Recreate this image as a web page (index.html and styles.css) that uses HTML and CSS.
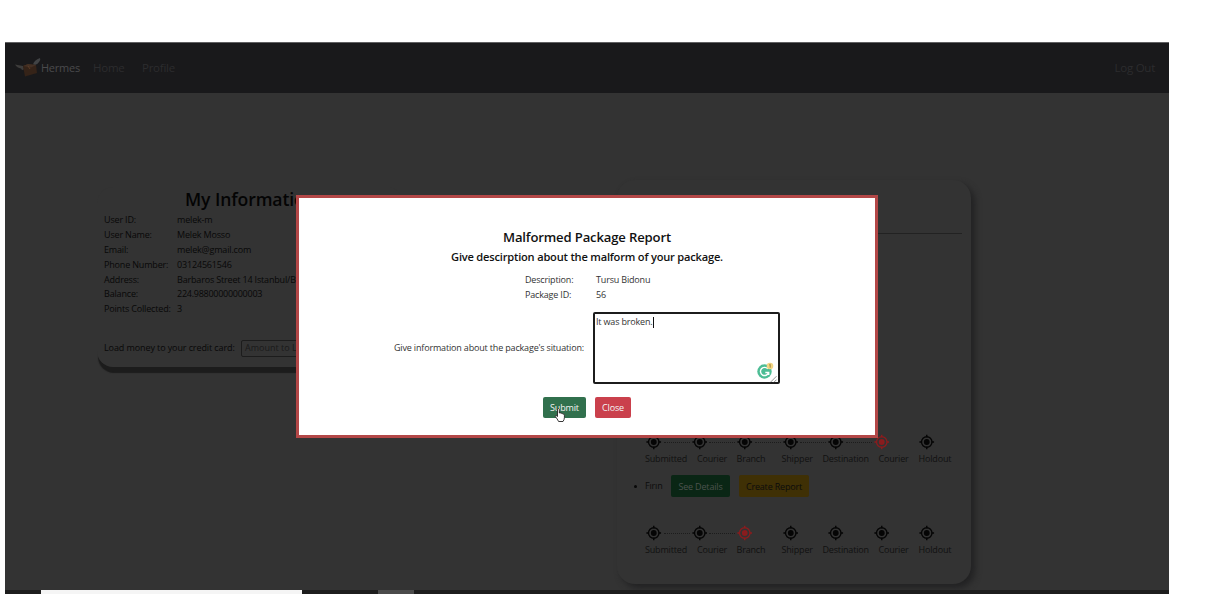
FILE: index.html
```html
<!DOCTYPE html>
<html lang="en">
<head>
<meta charset="utf-8">
<title>Hermes</title>
<link rel="stylesheet" href="styles.css">
</head>
<body>
<svg class="defs" aria-hidden="true">
  <symbol id="target" viewBox="0 0 16 16">
    <circle cx="8" cy="8" r="5.4" fill="none" stroke="currentColor" stroke-width="1.4"/>
    <circle cx="8" cy="8" r="3" fill="currentColor"/>
    <path d="M8 .4v2.6M8 13v2.6M.4 8h2.6M13 8h2.6" stroke="currentColor" stroke-width="1.5"/>
  </symbol>
</svg>
<div class="app">
  <nav class="navbar">
    <svg class="logo" viewBox="0 0 28 22">
      <path d="M1 7.500Q5 8 9 9L10 12Q8 14 7 11.500Q3 11 1 7.500Z" fill="#3d3c3b"/>
      <path d="M19 7.500Q20 3 26 1Q27 3 25 5Q24 7 21 8Z" fill="#414345"/>
      <path d="M9 9L14 7L22 8L23 16L11 19.500Z" fill="#352318"/>
      <path d="M9 9L14 7L22 8L17 10.500Z" fill="#443024"/>
      <path d="M14 9l2 3" stroke="#5a3c27"/>
    </svg>
    <span class="brand">Hermes</span>
    <span class="nav-home">Home</span>
    <span class="nav-profile">Profile</span>
    <span class="logout">Log Out</span>
  </nav>
  <main class="page">
    <section class="info-card">
      <h2 class="info-title">My Information</h2>
      <dl class="info-list">
        <dt>User ID:</dt><dd>melek-m</dd>
        <dt>User Name:</dt><dd>Melek Mosso</dd>
        <dt>Email:</dt><dd>melek@gmail.com</dd>
        <dt>Phone Number:</dt><dd>03124561546</dd>
        <dt>Address:</dt><dd>Barbaros Street 14 Istanbul/Be</dd>
        <dt>Balance:</dt><dd class="balance">224.98800000000003</dd>
        <dt>Points Collected:</dt><dd>3</dd>
      </dl>
      <div class="load-row"><span class="load-label">Load money to your credit card:</span><span class="amount">Amount to Lo</span></div>
    </section>
    <section class="packages-card">
      <hr class="divider">
      <div class="track">
        <div class="stops">
          <svg class="stop"><use href="#target"/></svg><i class="dots"></i>
          <svg class="stop"><use href="#target"/></svg><i class="dots"></i>
          <svg class="stop"><use href="#target"/></svg><i class="dots"></i>
          <svg class="stop"><use href="#target"/></svg><i class="dots"></i>
          <svg class="stop"><use href="#target"/></svg><i class="dots"></i>
          <svg class="stop current"><use href="#target"/></svg><i class="dots none"></i>
          <svg class="stop"><use href="#target"/></svg>
        </div>
        <div class="labels"><span>Submitted</span><span>Courier</span><span>Branch</span><span>Shipper</span><span>Destination</span><span>Courier</span><span>Holdout</span></div>
      </div>
      <div class="package">
        <i class="bullet"></i><span class="package-name">Fırın</span>
        <span class="btn details">See Details</span><span class="btn report">Create Report</span>
      </div>
      <div class="track">
        <div class="stops">
          <svg class="stop"><use href="#target"/></svg><i class="dots"></i>
          <svg class="stop"><use href="#target"/></svg><i class="dots"></i>
          <svg class="stop current"><use href="#target"/></svg><i class="dots none"></i>
          <svg class="stop"><use href="#target"/></svg><i class="dots none"></i>
          <svg class="stop"><use href="#target"/></svg><i class="dots none"></i>
          <svg class="stop"><use href="#target"/></svg><i class="dots none"></i>
          <svg class="stop"><use href="#target"/></svg>
        </div>
        <div class="labels"><span>Submitted</span><span>Courier</span><span>Branch</span><span>Shipper</span><span>Destination</span><span>Courier</span><span>Holdout</span></div>
      </div>
    </section>
  </main>
  <footer class="taskbar"><i class="task-search"></i><i class="task-item"></i></footer>

  <div class="modal">
    <h3 class="modal-title">Malformed Package Report</h3>
    <h4 class="modal-sub">Give descirption about the malform of your package.</h4>
    <div class="fields">
      <span>Description:</span><span>Tursu Bidonu</span>
      <span>Package ID:</span><span>56</span>
    </div>
    <div class="situation">
      <span class="sit-label">Give information about the package's situation:</span>
      <div class="textarea">
        <span class="typed">It was broken.</span><i class="caret"></i>
        <svg class="grammar" viewBox="0 0 24 24">
          <circle cx="9.500" cy="11.500" r="7.200" fill="#4dbd95"/>
          <path d="M12.800 8.900A4.100 4.100 0 1 0 13.500 12.700M10.300 12.500h3.400v2.600" fill="none" stroke="#fff" stroke-width="1.400"/>
          <circle cx="15" cy="6" r="3.300" fill="#f3d684"/>
          <path d="M14.300 5l.9-.7v3.400" fill="none" stroke="#8d7132" stroke-width=".8"/>
          <path d="M15.500 22.200l6-6M19 22.200l2.500-2.500" stroke="#777" stroke-width=".8"/>
        </svg>
      </div>
    </div>
    <div class="actions">
      <span class="action submit">Submit</span><span class="action close">Close</span>
    </div>
    <svg class="cursor" viewBox="0 0 12 16">
      <path d="M3.500 9.500V2.200Q4.400.9 5.300 2.200V6Q6.300 5.300 7 6.300Q8 5.700 8.600 6.900Q10.400 6.500 10.400 8.300V10.500Q10.400 12.500 9 14.500H4.600Q3.500 12 1.300 9.600Q1.200 8 2.700 8.800Z" fill="#fff" stroke="#222" stroke-width=".9"/>
    </svg>
  </div>
</div>
</body>
</html>
```

FILE: styles.css
```css
* { box-sizing: border-box; }
body { margin: 0; background: #fff; font-family: "Open Sans", "Noto Sans", sans-serif; font-size: 9px; letter-spacing: -.17px; line-height: 14.9px; overflow: hidden; white-space: nowrap; }
h2, h3, h4, dl, dd, hr { margin: 0; }
.defs { display: block; width: 0; height: 0; }
.app { position: relative; display: flex; flex-direction: column; width: 1164px; height: 552px; margin: 42px 0 0 5px; background: #333; color: #080808; }
.navbar { display: flex; align-items: center; height: 51px; flex: none; padding: 1px 14px 0 9px; background: #19191b; border-top: 1px solid #606062; color: #2c2c2e; font-size: 11.5px; letter-spacing: -.25px; }
.logo { width: 28px; height: 22px; margin-top: -2px; }
.brand { width: 52px; color: #4a4a4c; font-size: 11px; margin-left: -1px; }
.nav-home { width: 49px; }
.nav-profile { flex: 1; }
.page { display: flex; flex: 1; min-height: 0; align-items: flex-start; }
.info-card { width: 306px; height: 180px; margin: 94px 0 0 92px; padding: 2px 0 0 7px; border-radius: 16px; box-shadow: 1px 6px 1px #1c1c1c; background: #333; }
.info-title { margin: 0 0 4px 81px; font-size: 17.6px; letter-spacing: -.1px; line-height: 20px; font-weight: 600; color: #040404; }
.info-list { display: grid; grid-template-columns: 73px 1fr; grid-auto-rows: 14.9px; }
.balance { letter-spacing: -.26px; }
.load-row { display: flex; align-items: center; margin-top: 22px; height: 18px; }
.load-label { width: 137px; letter-spacing: -.1px; }
.amount { width: 100px; height: 17px; padding-left: 3px; border: 1px solid #1c1c1c; border-radius: 2px; color: #1a1a1a; letter-spacing: 0; }
.packages-card { width: 354px; height: 404px; margin: 87px 0 0 214px; padding-top: 53px; border-radius: 18px; background: #333; box-shadow: 4px 4px 6px #222223; }
.divider { height: 1px; margin: 0 9px 200px; border: 0; background: #222; }
.track { height: 34px; padding-left: 28px; }
.stops { display: flex; align-items: center; height: 16px; padding-left: 1px; }
.stop { width: 15.5px; height: 16px; flex: none; color: #050505; }
.current { color: #8a1c1e; }
.dots { width: 26px; margin: 0 2px; border-top: 1px dotted #1c1c1c; flex: none; }
.none { border-color: transparent; }
.labels { display: grid; grid-template-columns: 52px 39.5px 45px 41px 56px 40px 33px; margin-top: 2px; color: #111; }
.package { display: flex; align-items: center; height: 22px; margin: 7px 0 28px; padding-left: 17px; }
.bullet { width: 3px; height: 3px; border-radius: 50%; background: #080808; margin-right: 8px; }
.package-name { width: 26px; color: #0c0c0c; }
.btn { height: 22px; line-height: 23px; text-align: center; border-radius: 2px; }
.details { width: 59px; margin-right: 9px; background: #0a2615; color: #4c534e; }
.report { width: 70px; background: #3f3005; color: #0c0c0c; }
.taskbar { display: flex; height: 4.5px; flex: none; background: #1d1d1d; padding-left: 36px; }
.task-search { width: 261px; background: #f5f5f5; margin-right: 76px; }
.task-item { width: 36px; background: #4b4b4b; }
.modal { position: absolute; left: 291px; top: 153px; width: 582px; height: 243px; padding-top: 29px; border: 3px solid #b34747; background: #fff; color: #333; display: flex; flex-direction: column; }
.modal-title { align-self: center; font-size: 13.1px; letter-spacing: -.15px; line-height: 20px; font-weight: 600; color: #111; }
.modal-sub { align-self: center; font-size: 11.1px; letter-spacing: -.2px; line-height: 20px; font-weight: 600; color: #111; }
.fields { display: grid; grid-template-columns: 71px auto; grid-auto-rows: 15.2px; margin: 6px 0 0 226px; }
.situation { display: flex; align-items: center; height: 72px; margin: 9px 0 0 95px; }
.sit-label { width: 199px; }
.textarea { position: relative; width: 187px; height: 72px; padding: 1px 0 0 1px; border: 2px solid #1c1c1c; border-radius: 2px; display: flex; }
.caret { width: 1px; height: 11px; margin-top: 2px; background: #111; }
.grammar { position: absolute; right: -1px; bottom: -2px; width: 24px; height: 24px; }
.actions { display: flex; gap: 9px; margin: 13px 0 0 244px; }
.action { height: 21px; line-height: 21px; text-align: center; color: #f4f4f4; border-radius: 2px; }
.submit { width: 43px; background: #31704d; }
.close { width: 36px; background: #ca404c; }
.cursor { position: absolute; left: 255px; top: 209px; width: 12px; height: 16px; }
```
